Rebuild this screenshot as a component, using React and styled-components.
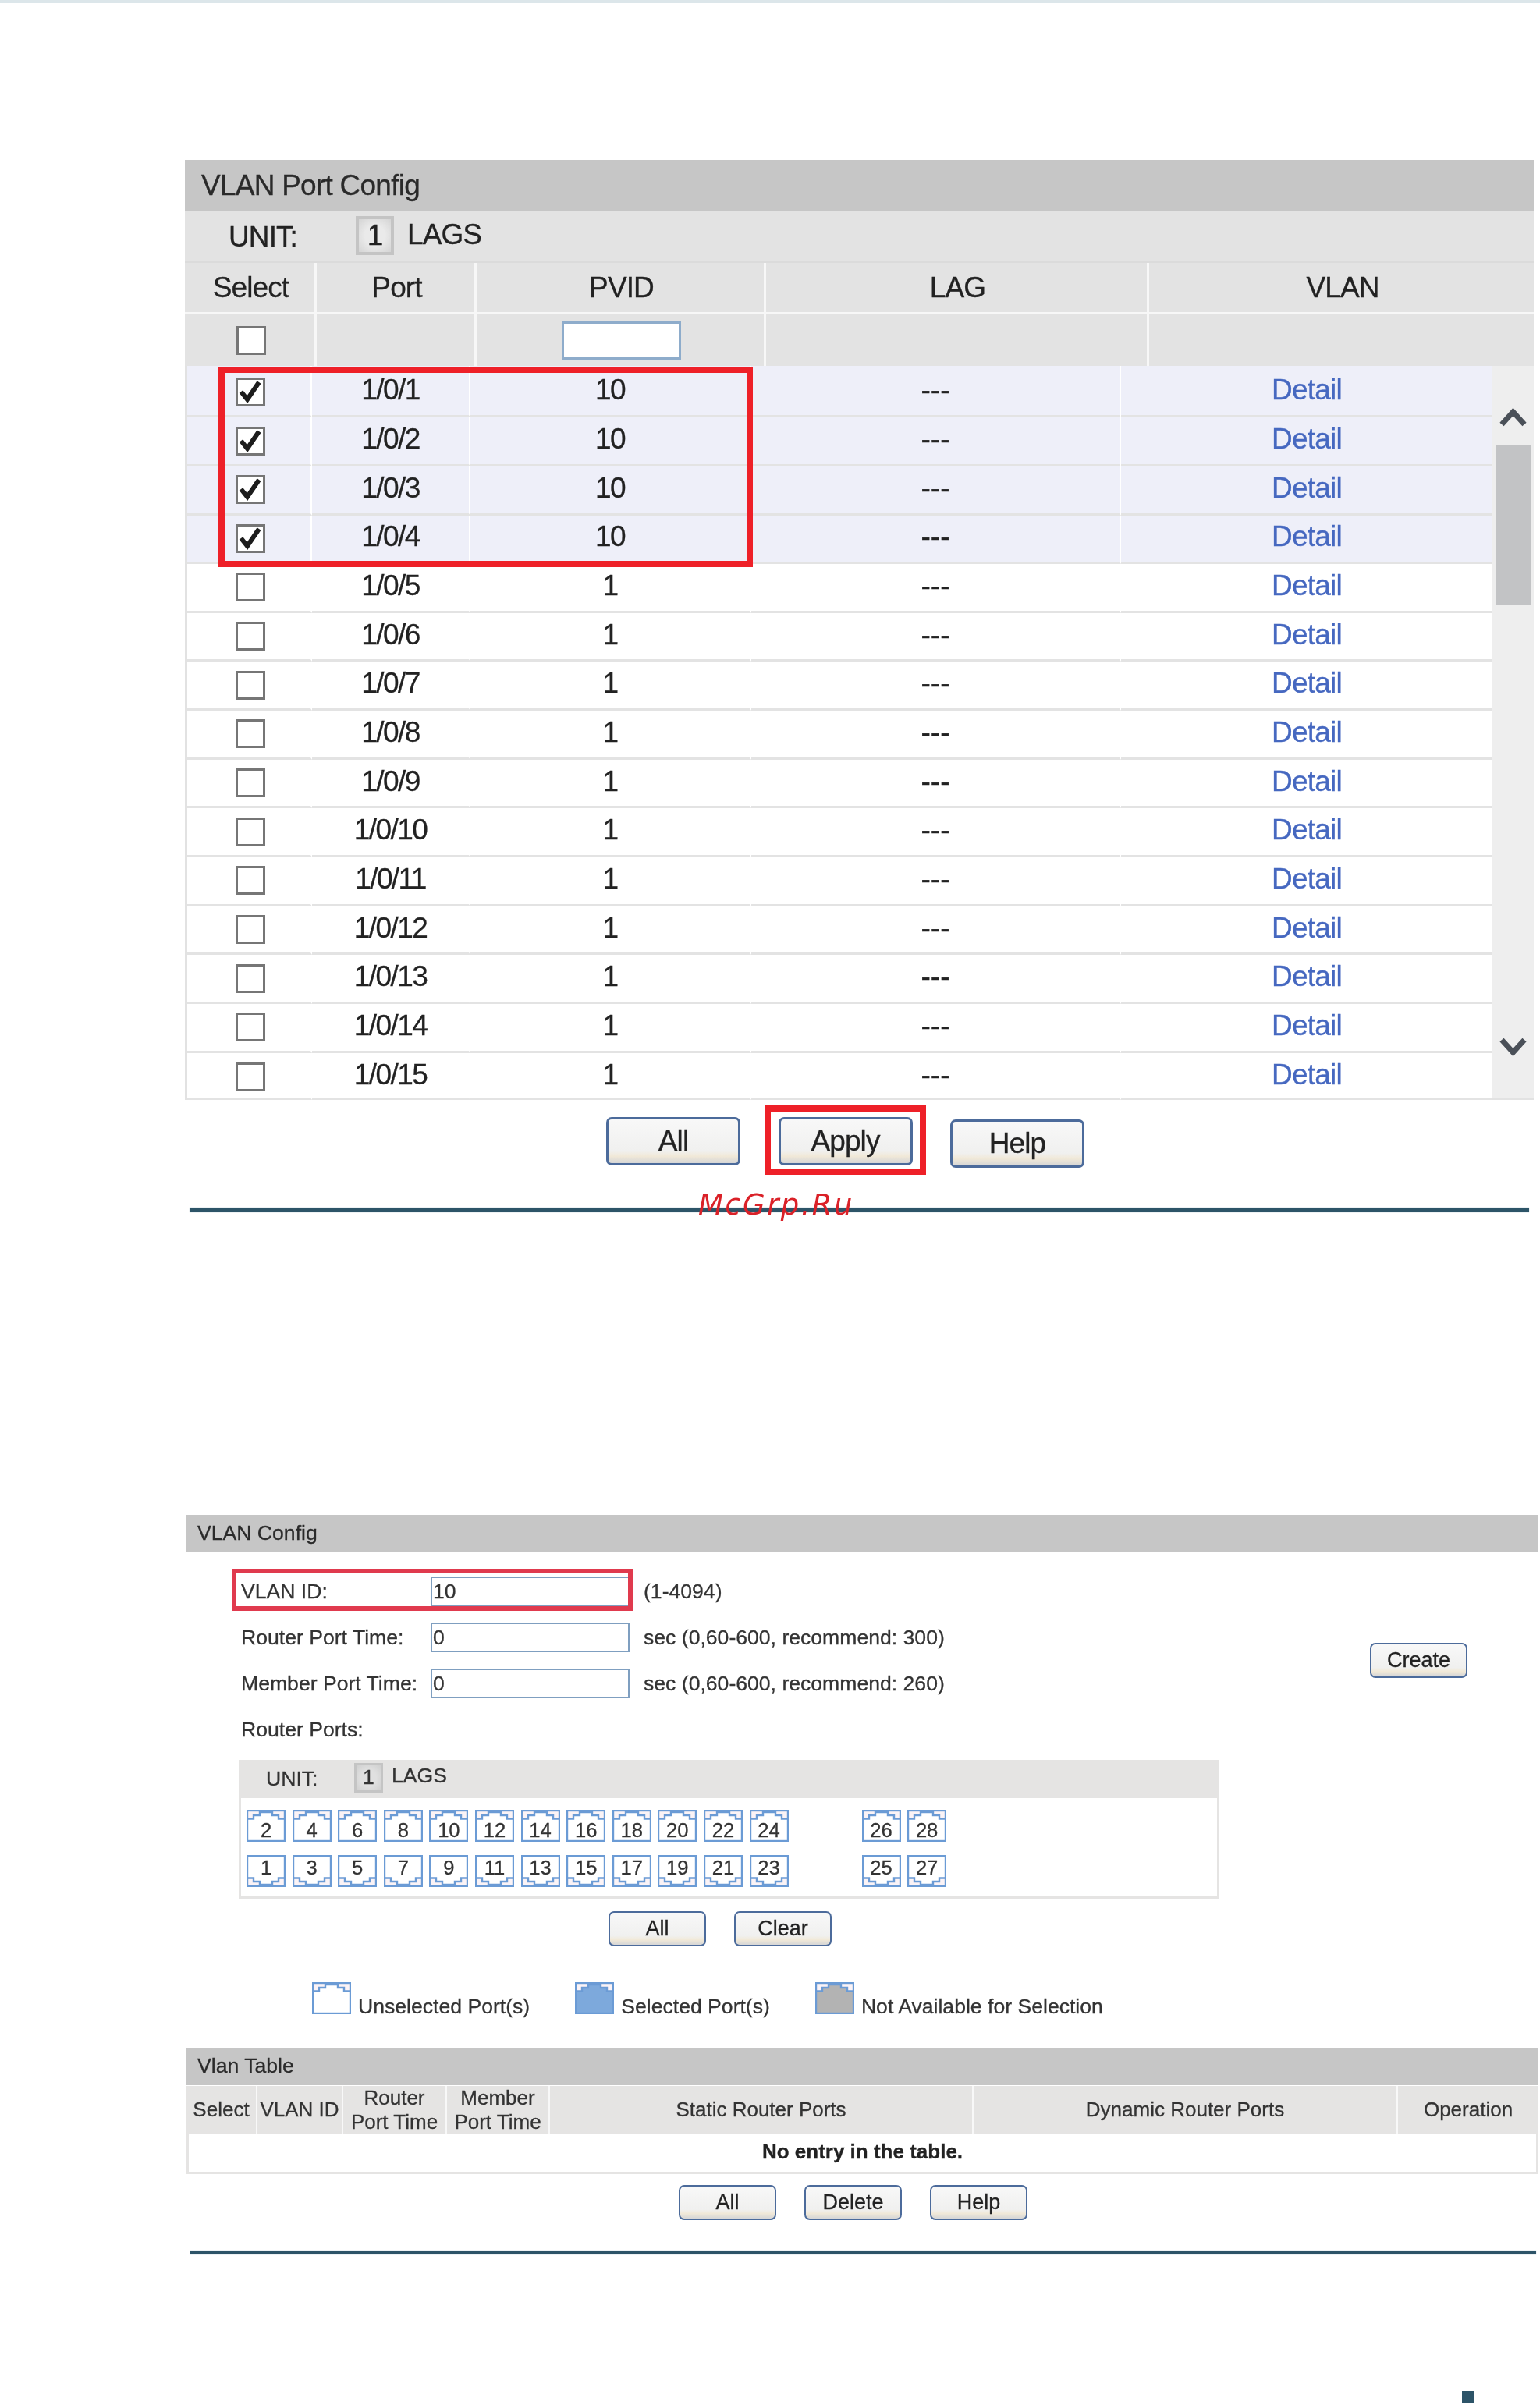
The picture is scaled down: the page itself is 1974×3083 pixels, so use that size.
import React from "react";
import styled, { createGlobalStyle } from "styled-components";

const GlobalStyle = createGlobalStyle`
  html, body {
    margin: 0;
    padding: 0;
    background: #fff;
  }
  body {
    font-family: "Liberation Sans", Arial, sans-serif;
    color: #222;
  }
`;

const Page = styled.div`
  width: 1974px;
  height: 3083px;
  overflow: hidden;
  filter: blur(0.5px);
  -webkit-text-stroke: 0.3px;
`;

const TopStrip = styled.div`
  height: 4px;
  background: #dce6ea;
`;

/* ---------- first screen: port config ---------- */

const PortConfig = styled.section`
  margin: 201px 0 0 237px;
  width: 1729px;
`;

const TitleBand = styled.div`
  height: ${(p) => p.$height}px;
  display: flex;
  align-items: center;
  padding-left: ${(p) => p.$pad}px;
  background: #c6c6c6;
  font-size: ${(p) => p.$size}px;
  letter-spacing: ${(p) => p.$spacing || 0}px;
  color: #2a2a2a;
`;

const UnitBar = styled.div`
  height: 67px;
  display: flex;
  align-items: center;
  padding-left: 56px;
  background: #e3e3e3;
  border-bottom: 3px solid #dbdbdb;
  box-sizing: border-box;
  font-size: 37px;
  letter-spacing: -0.9px;
`;

const UnitLabel = styled.span`
  width: 163px;
  padding-top: 4px;
`;

const UnitTile = styled.span`
  width: 49px;
  height: 50px;
  box-sizing: border-box;
  display: flex;
  align-items: center;
  justify-content: center;
  background: radial-gradient(#eaeaea 45%, #d4d4d4);
  border: 4px solid #c4c4c4;
`;

const LagsLabel = styled.span`
  margin-left: 17px;
  padding-bottom: 3px;
`;

const HeadGrid = styled.div`
  display: grid;
  grid-template-columns: 169px 205px 371px 491px 493px;
  grid-auto-rows: 66px;
  background: #e3e3e3;
`;

const HeadCell = styled.div`
  display: flex;
  align-items: center;
  justify-content: center;
  font-size: 37px;
  letter-spacing: -0.9px;
  box-sizing: border-box;
  padding-left: 3px;
  border-right: 3px solid #f7f7f7;
  border-bottom: ${(p) => (p.$ruled ? "3px solid #f7f7f7" : "none")};
  &:nth-child(5n) {
    border-right: none;
  }
`;

const Checkbox = styled.span`
  width: 38px;
  height: 37px;
  box-sizing: border-box;
  display: flex;
  align-items: center;
  justify-content: center;
  background: #fff;
  border: 3px solid #767676;
  svg {
    display: block;
  }
`;

const PvidInput = styled.span`
  width: 153px;
  height: 49px;
  box-sizing: border-box;
  background: #fff;
  border: 3px solid #8eaccb;
`;

const BodyWrap = styled.div`
  display: flex;
  position: relative;
`;

const Rows = styled.div`
  width: 1676px;
  box-sizing: border-box;
  border-left: 3px solid #e2e2e2;
`;

const Cell = styled.div`
  display: flex;
  align-items: center;
  justify-content: center;
  box-sizing: border-box;
  padding-bottom: 4px;
  font-size: 37px;
  letter-spacing: ${(p) => p.$spacing || 0}px;
  border-right: 2px solid #fff;
  border-bottom: 3px solid #e3e3e3;
  &:last-child {
    border-right: none;
  }
`;

const Row = styled.div`
  display: grid;
  grid-template-columns: 160px 203px 360px 474px 476px;
  height: 62.667px;
  background: ${(p) => (p.$selected ? "#eeeff9" : "#fff")};
  &:first-child {
    height: 66.2px;
  }
  &:first-child > ${Cell} {
    padding-top: 3px;
  }
  &:last-child {
    height: 60.2px;
  }
  &:last-child > ${Cell} {
    padding-bottom: 0;
  }
`;

const CheckCell = styled(Cell)`
  padding-left: 4px;
  ${Checkbox} {
    margin-top: 4px;
  }
`;

const DetailLink = styled.a`
  color: #4668c0;
  text-decoration: none;
`;

const Scrollbar = styled.div`
  width: 53px;
  display: flex;
  flex-direction: column;
  align-items: center;
  background: #eeeeee;
  border-bottom: 3px solid #e2e2e2;
  box-sizing: border-box;
`;

const ScrollThumb = styled.div`
  width: 44px;
  height: 205px;
  margin: 22px 0 552px;
  background: #c2c3c5;
`;

const SelectionBox = styled.div`
  position: absolute;
  left: 43px;
  top: 1px;
  width: 685px;
  height: 257px;
  box-sizing: border-box;
  border: 8px solid #ee2028;
  pointer-events: none;
`;

const ActionBar = styled.div`
  display: flex;
  align-items: flex-start;
  margin: ${(p) => p.$top}px 0 0 ${(p) => p.$left}px;
  gap: ${(p) => p.$gap}px;
`;

const Button = styled.button`
  width: ${(p) => (p.$big ? 172 : 125)}px;
  height: ${(p) => (p.$big ? 62 : 45)}px;
  margin-top: ${(p) => p.$drop || 0}px;
  padding: 0;
  box-sizing: border-box;
  font-family: inherit;
  font-size: ${(p) => (p.$big ? 37 : 27)}px;
  letter-spacing: ${(p) => (p.$big ? -0.9 : 0)}px;
  color: #222;
  border: ${(p) => (p.$big ? 3 : 2.5)}px solid #4c6b9b;
  border-radius: 7px;
  background: linear-gradient(#f8f8f8, #f0f0ef 72%, #f1e9d8 84%, #d6d6d6);
`;

const ApplyFrame = styled.div`
  position: relative;
  &::after {
    content: "";
    position: absolute;
    inset: -15px -17px -12px -18px;
    border: 8px solid #ee2028;
    pointer-events: none;
  }
`;

const RuleWrap = styled.div`
  position: relative;
  margin: ${(p) => p.$top}px 0 0 ${(p) => p.$left}px;
  width: ${(p) => p.$width}px;
`;

const Rule = styled.div`
  height: ${(p) => p.$height}px;
  background: #2d5468;
  box-shadow: 0 0 1px #9db3bf;
`;

const Watermark = styled.span`
  position: absolute;
  left: 652px;
  top: -25px;
  font-family: "DejaVu Sans", sans-serif;
  font-style: italic;
  font-size: 37px;
  line-height: 44px;
  letter-spacing: 2.4px;
  color: #da2128;
  white-space: nowrap;
  -webkit-text-stroke: 0;
`;

/* ---------- second screen: vlan config ---------- */

const VlanConfig = styled.section`
  margin: 388px 0 0 239px;
  width: 1733px;
`;

const FormArea = styled.div`
  display: flex;
  align-items: flex-start;
  margin-top: 22px;
  padding-left: 70px;
  font-size: 26.6px;
  color: #333;
`;

const FormFields = styled.div`
  width: 1447px;
`;

const FormRow = styled.div`
  height: 59px;
  display: flex;
  align-items: center;
`;

const FieldPair = styled.div`
  position: relative;
  align-self: stretch;
  display: flex;
  align-items: center;
  ${(p) =>
    p.$flagged &&
    `&::after {
      content: "";
      position: absolute;
      left: -12px;
      right: -4px;
      top: 0;
      bottom: 5px;
      border: 6px solid #e03a4e;
      pointer-events: none;
    }`}
`;

const FieldLabel = styled.label`
  width: 243px;
`;

const TextField = styled.div`
  width: 255px;
  height: 38px;
  box-sizing: border-box;
  display: flex;
  align-items: center;
  padding-left: 1px;
  border: 2px solid #7f9fc0;
`;

const Hint = styled.span`
  margin-left: 18px;
`;

const CreateSlot = styled.div`
  margin-top: 95px;
`;

const PortPanel = styled.div`
  margin: 9px 0 0 67px;
  width: 1257px;
`;

const PortHead = styled.div`
  height: 49px;
  display: flex;
  align-items: center;
  padding-left: 35px;
  background: #e5e4e3;
  font-size: 26.6px;
  color: #333;
`;

const PortUnitLabel = styled.span`
  width: 113px;
`;

const PortUnitTile = styled(UnitTile)`
  width: 37px;
  height: 38px;
  margin-bottom: 3px;
  border-width: 3px;
  background: radial-gradient(#e0e0e0 45%, #cfcfcf);
`;

const PortLags = styled.span`
  margin-left: 11px;
  padding-bottom: 7px;
`;

const PortBody = styled.div`
  box-sizing: border-box;
  height: 129px;
  padding: 15px 0 0 7px;
  display: flex;
  flex-direction: column;
  gap: 17px;
  border: 3px solid #e5e4e3;
  border-top: none;
`;

const PortRow = styled.div`
  display: flex;
`;

const PortGroup = styled.div`
  display: flex;
  gap: 8.6px;
  margin-left: ${(p) => p.$offset || 0}px;
`;

const PortTile = styled.div`
  position: relative;
  width: 50px;
  height: 41px;
  display: flex;
  justify-content: center;
  align-items: ${(p) => (p.$flip ? "flex-start" : "flex-end")};
  box-sizing: border-box;
  padding: ${(p) => (p.$flip ? "3px 0 0" : "0 0 1px")};
  font-size: 25.6px;
  line-height: 27px;
  color: #333;
  svg {
    position: absolute;
    inset: 0;
  }
  span {
    position: relative;
  }
`;

const Legend = styled.div`
  display: flex;
  gap: 58px;
  margin: 46px 0 0 161px;
  font-size: 26.6px;
  color: #333;
`;

const LegendItem = styled.div`
  display: flex;
  align-items: flex-end;
  gap: 9px;
`;

const LegendText = styled.span`
  line-height: 30px;
  margin-bottom: -5px;
`;

const TableSection = styled.div`
  margin-top: 43px;
`;

const VlanHeadGrid = styled.div`
  display: grid;
  grid-template-columns: 91px 110px 133px 132px 543px 544px 180px;
  height: 62px;
  margin-top: 1px;
  background: #e5e4e3;
`;

const VlanHeadCell = styled.div`
  display: flex;
  align-items: center;
  justify-content: center;
  text-align: center;
  box-sizing: border-box;
  font-size: 26px;
  line-height: 31px;
  color: #333;
  border-right: 2px solid #f8f8f8;
  &:last-child {
    border-right: none;
  }
`;

const EmptyRow = styled.div`
  height: 51px;
  box-sizing: border-box;
  display: flex;
  align-items: center;
  justify-content: center;
  font-size: 26px;
  font-weight: bold;
  color: #222;
  border: 3px solid #e5e4e3;
  border-top: none;
  padding-bottom: 2px;
`;

const PageMark = styled.div`
  width: 15px;
  height: 15px;
  margin: 175px 0 0 1874px;
  background: #2d5468;
`;

const ChevronIcon = styled.svg`
  display: block;
  margin-top: ${(p) => p.$top || 0}px;
`;

const Tick = () => (
  <svg width="30" height="29" viewBox="0 0 30 29">
    <path d="M3 14 L11 24 L26 2" fill="none" stroke="#1c1c1c" strokeWidth="6" />
  </svg>
);

const Chevron = ({ down }) => (
  <ChevronIcon width="35" height="28" viewBox="0 0 35 28" $top={down ? 0 : 52}>
    <path
      d={down ? "M3 5 L17.5 21 L32 5" : "M3 23 L17.5 7 L32 23"}
      fill="none"
      stroke="#4a5058"
      strokeWidth="7"
    />
  </ChevronIcon>
);

const SOCKET = "M1 11.5 H9 V7 H17 V3 H33 V7 H41 V11.5 H49";

const PortShape = ({ flip, fill = "#fff" }) => (
  <svg width="50" height="41" viewBox="0 0 50 41">
    <g transform={flip ? "matrix(1 0 0 -1 0 41)" : undefined}>
      <rect x="1" y="1" width="48" height="39" fill={fill} />
      <path d="M1 1 H49 V11.5 H41 V7 H33 V3 H17 V7 H9 V11.5 H1 Z" fill="#fbf3f6" />
      <rect x="1" y="1" width="48" height="39" fill="none" stroke="#6b9bd5" strokeWidth="2.4" />
      <path d={SOCKET} fill="none" stroke="#6b9bd5" strokeWidth="2.4" />
    </g>
  </svg>
);

const PortNumber = ({ n, flip }) => (
  <PortTile $flip={flip}>
    <PortShape flip={flip} />
    <span>{n}</span>
  </PortTile>
);

const range = (from, count) =>
  Array.from({ length: count }, (_, i) => from + i * 2);

const ports = Array.from({ length: 15 }, (_, i) => ({
  name: `1/0/${i + 1}`,
  pvid: i < 4 ? 10 : 1,
  selected: i < 4,
}));

const App = () => {
  return (
    <Page>
      <GlobalStyle />
      <TopStrip />

      <PortConfig>
        <TitleBand $height={65} $pad={21} $size={37} $spacing={-0.75}>
          VLAN Port Config
        </TitleBand>
        <UnitBar>
          <UnitLabel>UNIT:</UnitLabel>
          <UnitTile>1</UnitTile>
          <LagsLabel>LAGS</LagsLabel>
        </UnitBar>
        <HeadGrid>
          <HeadCell $ruled>Select</HeadCell>
          <HeadCell $ruled>Port</HeadCell>
          <HeadCell $ruled>PVID</HeadCell>
          <HeadCell $ruled>LAG</HeadCell>
          <HeadCell $ruled>VLAN</HeadCell>
          <HeadCell>
            <Checkbox />
          </HeadCell>
          <HeadCell />
          <HeadCell>
            <PvidInput />
          </HeadCell>
          <HeadCell />
          <HeadCell />
        </HeadGrid>
        <BodyWrap>
          <Rows>
            {ports.map((port) => (
              <Row key={port.name} $selected={port.selected}>
                <CheckCell>
                  <Checkbox>{port.selected && <Tick />}</Checkbox>
                </CheckCell>
                <Cell $spacing={-1.6}>{port.name}</Cell>
                <Cell $spacing={-1.6}>{port.pvid}</Cell>
                <Cell>---</Cell>
                <Cell $spacing={-0.8}>
                  <DetailLink href="#">Detail</DetailLink>
                </Cell>
              </Row>
            ))}
          </Rows>
          <Scrollbar>
            <Chevron />
            <ScrollThumb />
            <Chevron down />
          </Scrollbar>
          <SelectionBox />
        </BodyWrap>
        <ActionBar $top={22} $left={540} $gap={48.5}>
          <Button $big>All</Button>
          <ApplyFrame>
            <Button $big>Apply</Button>
          </ApplyFrame>
          <Button $big $drop={3}>
            Help
          </Button>
        </ActionBar>
      </PortConfig>

      <RuleWrap $top={51} $left={243} $width={1717}>
        <Rule $height={6} />
        <Watermark>McGrp.Ru</Watermark>
      </RuleWrap>

      <VlanConfig>
        <TitleBand $height={47} $pad={14} $size={26.6}>
          VLAN Config
        </TitleBand>
        <FormArea>
          <FormFields>
            <FormRow>
              <FieldPair $flagged>
                <FieldLabel>VLAN ID:</FieldLabel>
                <TextField>10</TextField>
              </FieldPair>
              <Hint>(1-4094)</Hint>
            </FormRow>
            <FormRow>
              <FieldPair>
                <FieldLabel>Router Port Time:</FieldLabel>
                <TextField>0</TextField>
              </FieldPair>
              <Hint>sec (0,60-600, recommend: 300)</Hint>
            </FormRow>
            <FormRow>
              <FieldPair>
                <FieldLabel>Member Port Time:</FieldLabel>
                <TextField>0</TextField>
              </FieldPair>
              <Hint>sec (0,60-600, recommend: 260)</Hint>
            </FormRow>
            <FormRow>Router Ports:</FormRow>
          </FormFields>
          <CreateSlot>
            <Button>Create</Button>
          </CreateSlot>
        </FormArea>

        <PortPanel>
          <PortHead>
            <PortUnitLabel>UNIT:</PortUnitLabel>
            <PortUnitTile>1</PortUnitTile>
            <PortLags>LAGS</PortLags>
          </PortHead>
          <PortBody>
            <PortRow>
              <PortGroup>
                {range(2, 12).map((n) => (
                  <PortNumber key={n} n={n} />
                ))}
              </PortGroup>
              <PortGroup $offset={94}>
                {range(26, 2).map((n) => (
                  <PortNumber key={n} n={n} />
                ))}
              </PortGroup>
            </PortRow>
            <PortRow>
              <PortGroup>
                {range(1, 12).map((n) => (
                  <PortNumber key={n} n={n} flip />
                ))}
              </PortGroup>
              <PortGroup $offset={94}>
                {range(25, 2).map((n) => (
                  <PortNumber key={n} n={n} flip />
                ))}
              </PortGroup>
            </PortRow>
          </PortBody>
        </PortPanel>

        <ActionBar $top={16} $left={541} $gap={36}>
          <Button>All</Button>
          <Button>Clear</Button>
        </ActionBar>

        <Legend>
          <LegendItem>
            <PortShape />
            <LegendText>Unselected Port(s)</LegendText>
          </LegendItem>
          <LegendItem>
            <PortShape fill="#7da9dc" />
            <LegendText>Selected Port(s)</LegendText>
          </LegendItem>
          <LegendItem>
            <PortShape fill="#b3b3b3" />
            <LegendText>Not Available for Selection</LegendText>
          </LegendItem>
        </Legend>

        <TableSection>
          <TitleBand $height={48} $pad={14} $size={26.6}>
            Vlan Table
          </TitleBand>
          <VlanHeadGrid>
            <VlanHeadCell>Select</VlanHeadCell>
            <VlanHeadCell>VLAN ID</VlanHeadCell>
            <VlanHeadCell>
              Router
              <br />
              Port Time
            </VlanHeadCell>
            <VlanHeadCell>
              Member
              <br />
              Port Time
            </VlanHeadCell>
            <VlanHeadCell>Static Router Ports</VlanHeadCell>
            <VlanHeadCell>Dynamic Router Ports</VlanHeadCell>
            <VlanHeadCell>Operation</VlanHeadCell>
          </VlanHeadGrid>
          <EmptyRow>No entry in the table.</EmptyRow>
        </TableSection>
        <ActionBar $top={14} $left={631} $gap={36}>
          <Button>All</Button>
          <Button>Delete</Button>
          <Button>Help</Button>
        </ActionBar>
      </VlanConfig>

      <RuleWrap $top={39} $left={244} $width={1725}>
        <Rule $height={5} />
      </RuleWrap>

      <PageMark />
    </Page>
  );
};

export default App;
